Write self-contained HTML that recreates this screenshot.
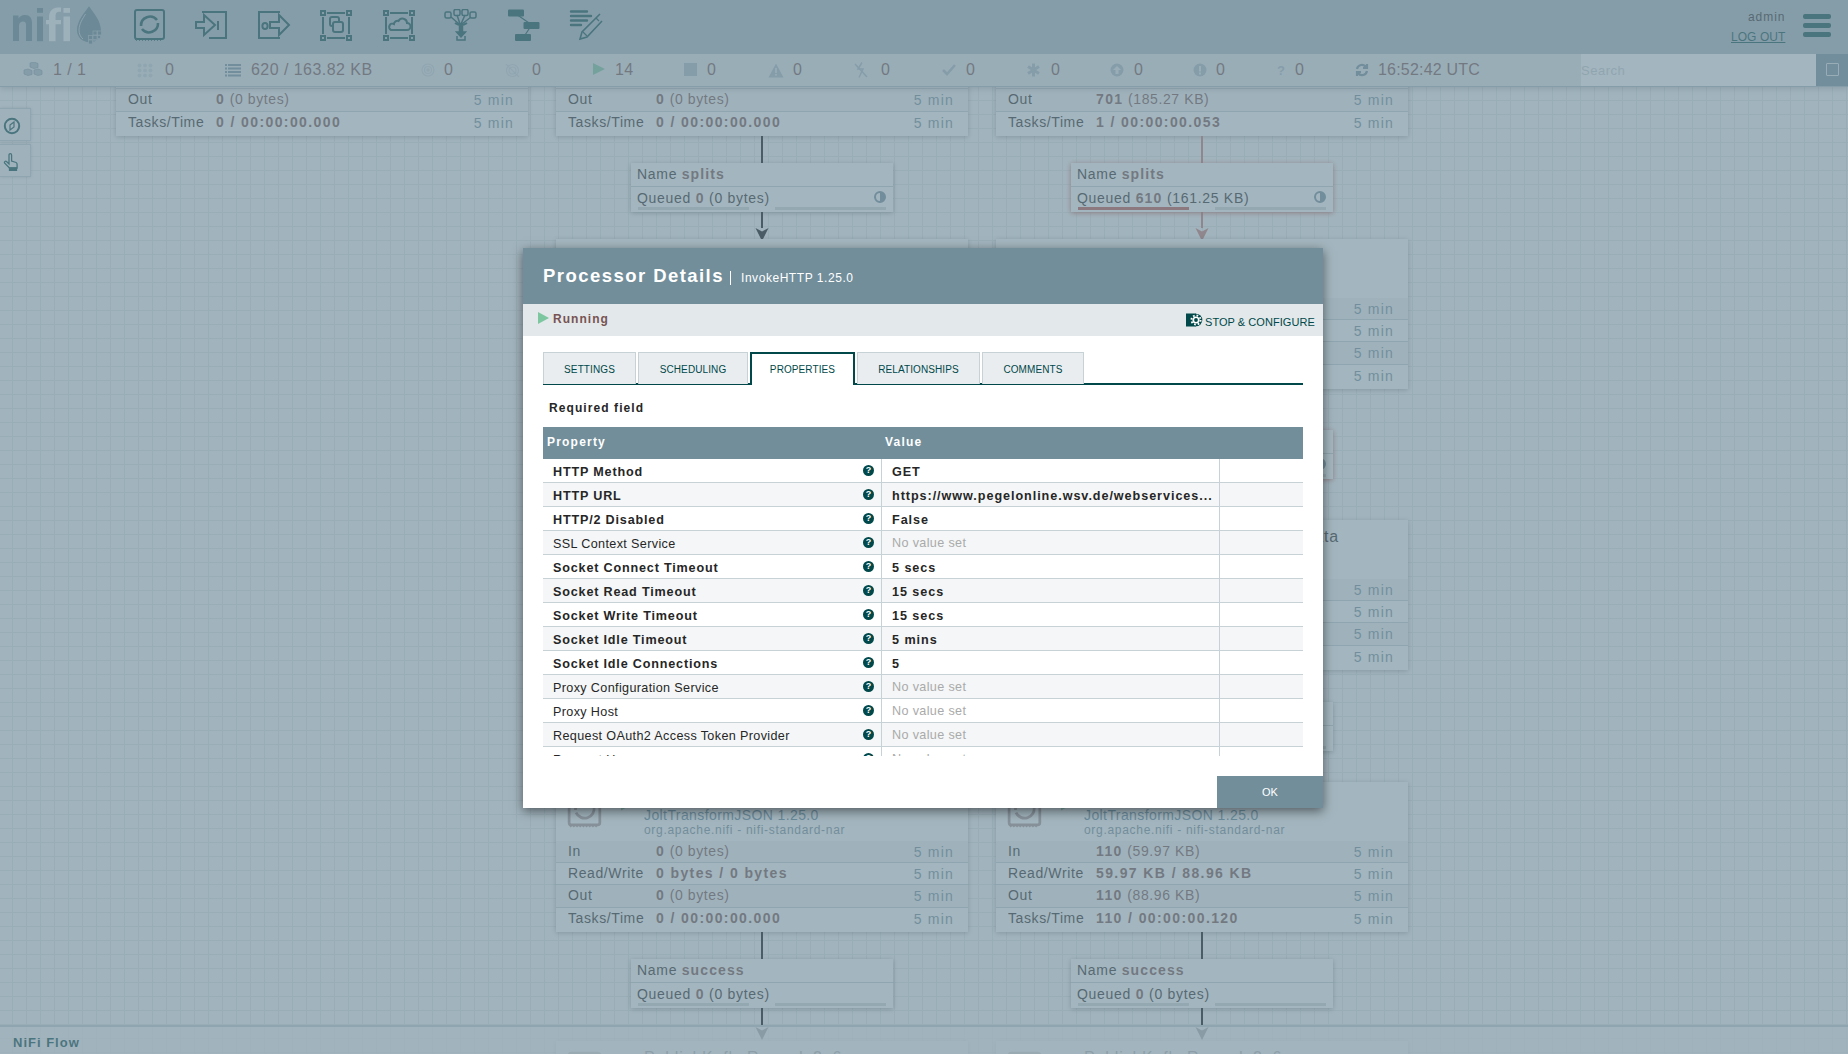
<!DOCTYPE html>
<html><head><meta charset="utf-8">
<style>
*{box-sizing:border-box;margin:0;padding:0}
html,body{width:1848px;height:1054px;overflow:hidden}
body{font-family:"Liberation Sans",sans-serif;position:relative;background:#f9fafb;
 background-image:linear-gradient(to right, #e3e9ec 1px, transparent 1px),linear-gradient(to bottom, #e3e9ec 1px, transparent 1px);
 background-size:14px 14px;background-position:12px 2px}
.abs{position:absolute}
/* header */
#header{position:absolute;z-index:6;left:0;top:0;width:1848px;height:54px;background:#aabbc3}
#status{position:absolute;z-index:5;left:0;top:54px;width:1848px;height:33px;background:#e3e8eb;border-bottom:1px solid #aabbc3;box-shadow:0 2px 6px rgba(0,0,0,0.22)}
.st{position:absolute;top:0px;height:32px;line-height:32px;font-size:16px;color:#775351;letter-spacing:0.45px;white-space:nowrap}
.sti{position:absolute}
#search{position:absolute;z-index:6;left:1581px;top:54px;width:235px;height:32px;background:#fff;font-size:13px;color:#c7d2d7;line-height:34px;padding-left:0;letter-spacing:0.5px}
#searchbtn{position:absolute;z-index:5;left:1816px;top:54px;width:32px;height:32px;background:#728e9b}
/* canvas */
.proc{position:absolute;background:#fff;box-shadow:0 1px 5px rgba(0,0,0,0.32)}
.picon{position:absolute;left:11px;top:10px}
.prun{position:absolute;left:64px;top:14px}
.pname{position:absolute;left:88px;top:7.5px;font-size:16px;color:#262626;letter-spacing:0.8px;white-space:nowrap}
.ptype{position:absolute;left:88px;top:25px;font-size:14px;color:#598599;letter-spacing:0.4px;white-space:nowrap}
.pbundle{position:absolute;left:88px;top:41px;font-size:12px;color:#728e9b;letter-spacing:0.7px;white-space:nowrap}
.prow{position:absolute;left:0;width:100%;background:#fff;font-size:14px;line-height:22px;white-space:nowrap}
.prow.odd{background:#f4f6f7}
.pl{position:absolute;left:12px;top:-1px;color:#262626;letter-spacing:0.6px}
.pv{position:absolute;left:100px;top:-1px;color:#775351;letter-spacing:0.6px}
.pv b{letter-spacing:1.4px}
.pt{position:absolute;right:14px;top:-0.5px;color:#7391a0;letter-spacing:1.2px}
.lbl{position:absolute;width:262px;height:48.5px;background:#fff;box-shadow:0 1px 5px rgba(0,0,0,0.35);font-size:14px;white-space:nowrap}
.lbl.red{box-shadow:0 1px 5px rgba(186,85,74,0.9)}
.lr1{position:absolute;left:0;padding-left:6px;top:0;height:24px;width:100%;line-height:22px;color:#262626;letter-spacing:0.7px;border-bottom:1px solid #c7d2d7}
.lr1 b{color:#775351;letter-spacing:1.1px}
.lr2{position:absolute;left:6px;top:24px;line-height:22px;color:#262626;letter-spacing:0.7px}
.lr2 b{color:#775351;letter-spacing:1.1px}
.pb1{position:absolute;left:7px;top:44px;width:111px;height:3px;background:#d4dadd}
.pb2{position:absolute;left:144px;top:44px;width:111px;height:3px;background:#d4dadd}
.lbl.red .pb1{background:#ba554a}
.lic{position:absolute;left:243px;top:28px;width:12px;height:12px;border-radius:50%;border:2px solid #728e9b;background:linear-gradient(to right,transparent 50%,#728e9b 50%)}
.vl{position:absolute;width:2px}
.arr{position:absolute}
#bread{position:absolute;z-index:5;left:0;top:1025px;width:1848px;height:29px;background:rgba(249,250,251,0.72);border-top:2px solid #c7d2d7}
#bread span{position:absolute;left:13px;top:8px;font-size:13px;font-weight:bold;color:#004849;letter-spacing:1px}
.lbtn{position:absolute;z-index:4;left:0;width:31px;height:33px;background:#f4f6f7;border:1px solid #c7d2d7;border-left:none;box-shadow:0 0 3px rgba(0,0,0,0.2)}
/* glass */
#glass{position:absolute;z-index:10;left:0;top:0;width:1848px;height:1054px;background:rgba(114,142,155,0.65)}
/* dialog */
#dlg{position:absolute;z-index:11;left:523px;top:248px;width:800px;height:560px;background:#fff;box-shadow:0 3px 10px rgba(0,0,0,0.5)}
#dhead{position:absolute;left:0;top:0;width:800px;height:56px;background:#728e9b;color:#fff;white-space:nowrap}
#dtitle{position:absolute;left:20px;top:17px;font-size:18.5px;font-weight:bold;letter-spacing:1.45px}
#dsep{position:absolute;left:207px;top:23px;width:1px;height:14px;background:#fff}
#dsub{position:absolute;left:218px;top:23px;font-size:12px;letter-spacing:0.55px}
#dstat{position:absolute;left:0;top:56px;width:800px;height:32px;background:#e3e8eb}
#drun{position:absolute;left:30px;top:8px;font-size:12px;font-weight:bold;color:#775351;letter-spacing:1.05px}
#dplay{position:absolute;left:15px;top:8px;width:0;height:0;border-top:6px solid transparent;border-bottom:6px solid transparent;border-left:11px solid #7dc7a0}
#dstop{position:absolute;left:682px;top:12px;font-size:11px;color:#004849;letter-spacing:0.05px;white-space:nowrap}
#tabs{position:absolute;left:20px;top:104px;width:760px;height:33px;border-bottom:2px solid #004849}
.tab{position:absolute;top:0;height:32px;background:#e9edf0;border:1px solid #c7d2d7;border-bottom:none;font-size:10px;letter-spacing:0.1px;color:#004849;text-align:center;line-height:33px;white-space:nowrap}
.tab.sel{background:#fff;border:2px solid #004849;border-bottom:none;height:33px;line-height:31px}
#req{position:absolute;left:26px;top:153px;font-size:12px;font-weight:bold;color:#262626;letter-spacing:1.08px}
#thead{position:absolute;left:20px;top:179px;width:760px;height:32px;background:#728e9b;color:#fff;font-size:12px;font-weight:bold;letter-spacing:1.2px}
#thead .h1{position:absolute;left:4px;top:8px}
#thead .h2{position:absolute;left:342px;top:8px}
#tview{position:absolute;left:20px;top:211px;width:760px;height:297px;overflow:hidden}
.tr{position:absolute;left:0;width:760px;height:24px;background:#fff;border-bottom:1px solid #c7d2d7;font-size:12.6px;white-space:nowrap}
.tr.alt{background:#f4f6f7}
.c1{position:absolute;left:10px;top:6px}
.c1.req{font-weight:bold;color:#262626;letter-spacing:0.82px}
.c1.opt{color:#262626;letter-spacing:0.36px}
.help{position:absolute;left:320px;top:6px;width:11px;height:11px;border-radius:50%;background:#004849;color:#fff;font-size:9px;font-weight:bold;line-height:11px;text-align:center}
.c2{position:absolute;left:338px;top:0;width:339px;height:23px;border-left:1px solid #c7d2d7;border-right:1px solid #c7d2d7}
.vreq{position:absolute;left:10px;top:6px;font-weight:bold;color:#262626;letter-spacing:0.95px}
.vnone{position:absolute;left:10px;top:5px;color:#aaa;letter-spacing:0.36px}
#ok{position:absolute;left:694px;top:528px;width:106px;height:32px;background:#728e9b;color:#fff;font-size:11px;text-align:center;line-height:32px}
</style></head><body>
<div id="header">
 <svg class="abs" style="left:8px;top:4px" width="100" height="42" viewBox="0 0 100 42">
  <path d="M5 11.5h5.5v3a7 7 0 0 1 6.5-3.5c5 0 7 3 7 8v18h-6v-16c0-2.5-1-3.5-3-3.5s-4 1.5-4 4v15.5h-6z" fill="#60808f"/>
  <rect x="29" y="4" width="6" height="4.8" fill="#60808f"/><rect x="29" y="12.5" width="6" height="24.7" fill="#60808f"/>
  <path d="M41 37.2v-17h-3v-4.2h3v-3c0-4 2.3-9.6 9-9.6h3v4.4h-2c-2 0-3.5 1.3-3.5 4.2v4h5.5v4.2h-5.5v17z" fill="#eef2f4"/>
  <rect x="55.5" y="4" width="6.5" height="4.8" fill="#eef2f4"/><rect x="55.5" y="12.5" width="6.5" height="24.7" fill="#eef2f4"/>
  <path d="M81 2.3c-4 6-12 14-12 24 0 7 5.5 12 12.5 12 7 0 11.5-5 11.5-11 0-11-8-19-12-25z" fill="#60808f"/>
  <path d="M77.5 10c-3 5-6.5 10-6.5 16 0 4 1.5 7 4 9" stroke="#d6dfe3" stroke-width="0.8" fill="none"/>
  <g fill="#60808f" stroke="#aabbc3" stroke-width="0.8"><rect x="85" y="27" width="4" height="4"/><rect x="89.5" y="27" width="4" height="4"/><rect x="80.5" y="31.5" width="4" height="4"/><rect x="85" y="31.5" width="4" height="4"/><rect x="89.5" y="31.5" width="3" height="3"/><rect x="80.5" y="36" width="4" height="4"/><rect x="85" y="36" width="2" height="2"/></g>
 </svg>
 <!-- toolbar icons -->
 <svg class="abs" style="left:133px;top:8px" width="34" height="34" viewBox="0 0 34 34" fill="none" stroke="#004849">
  <rect x="2" y="2" width="29" height="29" rx="2" stroke-width="2"/>
  <path d="M2 31l1.5 1.5 1.5-1.5 1.5 1.5 1.5-1.5 1.5 1.5 1.5-1.5 1.5 1.5 1.5-1.5 1.5 1.5 1.5-1.5 1.5 1.5 1.5-1.5 1.5 1.5 1.5-1.5 1.5 1.5 1.5-1.5 1.5 1.5 1.5-1.5" stroke-width="1"/>
  <path d="M8 18a9 9 0 0 1 16-6" stroke-width="2.6"/><path d="M25 15a9 9 0 0 1-16 6" stroke-width="2.6"/>
 </svg>
 <svg class="abs" style="left:195px;top:10px" width="34" height="30" viewBox="0 0 34 30" fill="none" stroke="#004849" stroke-width="2">
  <path d="M7 2h24v26H14"/><path d="M1 12h8V5l11 10-11 10v-7H1z"/><path d="M23 11v9"/>
 </svg>
 <svg class="abs" style="left:257px;top:10px" width="34" height="30" viewBox="0 0 34 30" fill="none" stroke="#004849" stroke-width="2">
  <path d="M23 2H2v26h21"/><ellipse cx="8" cy="16" rx="2.6" ry="3"/><path d="M13 12h9V5l10 10-10 10v-7h-9z"/>
 </svg>
 <svg class="abs" style="left:319px;top:9px" width="34" height="33" viewBox="0 0 34 33" fill="none" stroke="#004849" stroke-width="2">
  <rect x="2" y="2" width="4" height="4"/><rect x="28" y="2" width="4" height="4"/><rect x="2" y="27" width="4" height="4"/><rect x="28" y="27" width="4" height="4"/>
  <path d="M8 4h18M8 29h18M4 8v17M30 8v17"/><rect x="11" y="8" width="9" height="9" rx="2"/><rect x="14" y="13" width="10" height="10" rx="2" fill="#aabbc3"/>
 </svg>
 <svg class="abs" style="left:382px;top:9px" width="34" height="33" viewBox="0 0 34 33" fill="none" stroke="#004849" stroke-width="2">
  <rect x="2" y="2" width="4" height="4"/><rect x="28" y="2" width="4" height="4"/><rect x="2" y="27" width="4" height="4"/><rect x="28" y="27" width="4" height="4"/>
  <path d="M8 4h18M8 29h18M4 8v17M30 8v17"/><path d="M9 21h16a3.5 3.5 0 0 0 0-7 4.5 4.5 0 0 0-8.5-2 3.5 3.5 0 0 0-4.5 3 3 3 0 0 0-3 6z"/>
 </svg>
 <svg class="abs" style="left:444px;top:9px" width="34" height="34" viewBox="0 0 34 34" fill="none" stroke="#004849" stroke-width="1.5">
  <rect x="1" y="3" width="6" height="6" rx="1.5"/><rect x="10" y="0.5" width="6" height="6" rx="1.5"/><rect x="18" y="0.5" width="6" height="6" rx="1.5"/><rect x="26" y="3" width="6" height="6" rx="1.5"/>
  <path d="M7 8l8 7M13 6l3 9M21 6l-4 9M27 8l-9 7"/><path d="M11 14q6 4 12 0" stroke-width="2"/>
  <path d="M15.5 17v6h-3l4.5 5 4.5-5h-3v-6z" fill="#004849"/><path d="M13 27v4h8v-4"/>
 </svg>
 <svg class="abs" style="left:507px;top:9px" width="34" height="33" viewBox="0 0 34 33">
  <rect x="1" y="0.5" width="16" height="7" rx="1" fill="#004849"/><rect x="16.5" y="13" width="16" height="7" rx="1" fill="#004849"/><rect x="8" y="25" width="16" height="7" rx="1" fill="#004849"/>
  <path d="M9 5l16 11M24 17l-8 12" stroke="#004849" stroke-width="1.2"/>
 </svg>
 <svg class="abs" style="left:569px;top:10px" width="34" height="31" viewBox="0 0 34 31" fill="none" stroke="#004849">
  <path d="M2 1.5h16M2 6h20M2 10.5h16M2 15h10" stroke-width="2.4" stroke-linecap="round"/>
  <path d="M31 4L13 22l-2 7 7-2 15-16" stroke-width="1.6"/><path d="M14 22l4 4M27 8l3 3" stroke-width="1.2"/>
 </svg>
 <div class="abs" style="left:1748px;top:10px;font-size:12px;color:#262626;letter-spacing:0.95px">admin</div>
 <div class="abs" style="left:1731px;top:30px;font-size:12px;color:#004849;text-decoration:underline;letter-spacing:0.05px">LOG OUT</div>
 <div class="abs" style="left:1803px;top:14px;width:28px;height:4.5px;border-radius:2px;background:#004849"></div>
 <div class="abs" style="left:1803px;top:23px;width:28px;height:4.5px;border-radius:2px;background:#004849"></div>
 <div class="abs" style="left:1803px;top:32px;width:28px;height:4.5px;border-radius:2px;background:#004849"></div>
</div>
<div id="status">
 <svg class="sti" style="left:23px;top:8px" width="20" height="17" viewBox="0 0 20 17" fill="#aabbc3" stroke="#728e9b" stroke-width="0.6">
  <path d="M7 1l4-1 4 1.5v4l-4 1-4-1.5z"/><path d="M1 8l4-1 4 1.5v4l-4 1-4-1.5z"/><path d="M11 8l4-1 4 1.5v4l-4 1-4-1.5z"/>
 </svg>
 <div class="st" style="left:53px">1 / 1</div>
 <svg class="sti" style="left:137px;top:9px" width="16" height="15" viewBox="0 0 16 15" fill="#c7d2d7"><circle cx="2.5" cy="2.5" r="2"/><circle cx="8" cy="2.5" r="2"/><circle cx="13.5" cy="2.5" r="2"/><circle cx="2.5" cy="7.5" r="2"/><circle cx="8" cy="7.5" r="2"/><circle cx="13.5" cy="7.5" r="2"/><circle cx="2.5" cy="12.5" r="2"/><circle cx="8" cy="12.5" r="2"/><circle cx="13.5" cy="12.5" r="2"/></svg>
 <div class="st" style="left:165px">0</div>
 <svg class="sti" style="left:225px;top:9px" width="16" height="14" viewBox="0 0 16 14" fill="#728e9b"><rect x="0" y="1" width="2" height="2"/><rect x="3" y="1" width="13" height="2"/><rect x="0" y="4.5" width="2" height="2"/><rect x="3" y="4.5" width="13" height="2"/><rect x="0" y="8" width="2" height="2"/><rect x="3" y="8" width="13" height="2"/><rect x="0" y="11.5" width="2" height="2"/><rect x="3" y="11.5" width="13" height="2"/></svg>
 <div class="st" style="left:251px">620 / 163.82 KB</div>
 <svg class="sti" style="left:421px;top:9px" width="14" height="14" viewBox="0 0 14 14" fill="none" stroke="#c7d2d7" stroke-width="1.2"><circle cx="7" cy="7" r="6"/><circle cx="7" cy="7" r="3.5"/><circle cx="7" cy="7" r="1.2" fill="#c7d2d7"/></svg>
 <div class="st" style="left:444px">0</div>
 <svg class="sti" style="left:505px;top:9px" width="15" height="15" viewBox="0 0 15 15" fill="none" stroke="#c7d2d7" stroke-width="1.2"><circle cx="7.5" cy="7.5" r="6"/><circle cx="7.5" cy="7.5" r="3.5"/><path d="M1 1l13 13"/></svg>
 <div class="st" style="left:532px">0</div>
 <div class="sti" style="left:593px;top:9px;width:0;height:0;border-top:6.5px solid transparent;border-bottom:6.5px solid transparent;border-left:12px solid #7dc7a0"></div>
 <div class="st" style="left:615px">14</div>
 <div class="sti" style="left:684px;top:9px;width:13px;height:13px;background:#aabbc3"></div>
 <div class="st" style="left:707px">0</div>
 <svg class="sti" style="left:768px;top:8.5px" width="16" height="15" viewBox="0 0 16 15"><path d="M8 0.5L15.5 14.5H0.5z" fill="#aabbc3"/><rect x="7.2" y="5" width="1.6" height="5" fill="#e3e8eb"/><rect x="7.2" y="11" width="1.6" height="1.6" fill="#e3e8eb"/></svg>
 <div class="st" style="left:793px">0</div>
 <svg class="sti" style="left:854px;top:8px" width="14" height="16" viewBox="0 0 14 16" fill="none" stroke="#aabbc3" stroke-width="1.5"><path d="M8 0.5L4 7h5l-4 8.5"/><path d="M1 2l12 13"/></svg>
 <div class="st" style="left:881px">0</div>
 <svg class="sti" style="left:942px;top:10px" width="14" height="12" viewBox="0 0 14 12" fill="none" stroke="#aabbc3" stroke-width="2.6"><path d="M1 6l4 4 8-9"/></svg>
 <div class="st" style="left:966px">0</div>
 <svg class="sti" style="left:1027px;top:9px" width="13" height="14" viewBox="0 0 13 14" stroke="#aabbc3" stroke-width="3"><path d="M6.5 0.5v13M1 3.5l11 7M12 3.5l-11 7"/></svg>
 <div class="st" style="left:1051px">0</div>
 <svg class="sti" style="left:1110px;top:9px" width="14" height="14" viewBox="0 0 14 14"><circle cx="7" cy="7" r="6.5" fill="#aabbc3"/><path d="M7 3l-4 4h2.5v4h3V7H11z" fill="#e3e8eb"/></svg>
 <div class="st" style="left:1134px">0</div>
 <svg class="sti" style="left:1193px;top:9px" width="14" height="14" viewBox="0 0 14 14"><circle cx="7" cy="7" r="6.5" fill="#aabbc3"/><rect x="6" y="3" width="2" height="5.5" fill="#e3e8eb"/><rect x="6" y="9.5" width="2" height="2" fill="#e3e8eb"/></svg>
 <div class="st" style="left:1216px">0</div>
 <div class="sti" style="left:1277px;top:0;font-size:13px;font-weight:bold;color:#aabbc3;line-height:33px">?</div>
 <div class="st" style="left:1295px">0</div>
 <svg class="sti" style="left:1355px;top:9px" width="14" height="14" viewBox="0 0 14 14" fill="none" stroke="#728e9b" stroke-width="2.2"><path d="M2 6a5 5 0 0 1 9-2"/><path d="M12 8a5 5 0 0 1-9 2"/><path d="M12 1v4H8" fill="#728e9b"/><path d="M2 13V9h4"/></svg>
 <div class="st" style="left:1378px;letter-spacing:0.2px">16:52:42 UTC</div>
</div>
<div id="search">Search</div>
<div id="searchbtn"><div class="abs" style="left:10px;top:9px;width:13px;height:13px;border:1px solid #e3e8eb;border-radius:1px"></div></div>

<div class="proc" style="left:116px;top:-14px;width:412px;height:150px"><svg class="picon" width="36" height="36" viewBox="0 0 34 34" fill="none" stroke="#ad9897"><rect x="2" y="2" width="29" height="29" rx="2" stroke-width="2.6"/><path d="M2 31l1.5 1.8 1.5-1.8 1.5 1.8 1.5-1.8 1.5 1.8 1.5-1.8 1.5 1.8 1.5-1.8 1.5 1.8 1.5-1.8 1.5 1.8 1.5-1.8 1.5 1.8 1.5-1.8 1.5 1.8 1.5-1.8 1.5 1.8 1.5-1.8" stroke-width="1"/><path d="M8 17a9 9 0 0 1 16-6" stroke-width="2.6"/><path d="M25.5 14a9 9 0 0 1-17 5.5" stroke-width="2.6"/></svg><svg class="prun" width="14" height="15" viewBox="0 0 14 15"><path d="M1 0.5L13 7.5 1 14.5z" fill="#7dc7a0"/></svg><div class="pname" style=""></div><div class="ptype"></div><div class="pbundle"></div><div class="prow odd" style="top:59px;height:22px;border-bottom:1px solid #c7d2d7;"><span class="pl">In</span><span class="pv"><b>0</b> (0 bytes)</span><span class="pt">5 min</span></div><div class="prow" style="top:81px;height:22px;border-bottom:1px solid #c7d2d7;"><span class="pl">Read/Write</span><span class="pv"><b>0 bytes / 0 bytes</b></span><span class="pt">5 min</span></div><div class="prow odd" style="top:103px;height:23px;border-bottom:1px solid #c7d2d7;"><span class="pl">Out</span><span class="pv"><b>0</b> (0 bytes)</span><span class="pt">5 min</span></div><div class="prow" style="top:126px;height:24px;"><span class="pl">Tasks/Time</span><span class="pv"><b>0 / 00:00:00.000</b></span><span class="pt">5 min</span></div></div>
<div class="proc" style="left:556px;top:-14px;width:412px;height:150px"><svg class="picon" width="36" height="36" viewBox="0 0 34 34" fill="none" stroke="#ad9897"><rect x="2" y="2" width="29" height="29" rx="2" stroke-width="2.6"/><path d="M2 31l1.5 1.8 1.5-1.8 1.5 1.8 1.5-1.8 1.5 1.8 1.5-1.8 1.5 1.8 1.5-1.8 1.5 1.8 1.5-1.8 1.5 1.8 1.5-1.8 1.5 1.8 1.5-1.8 1.5 1.8 1.5-1.8 1.5 1.8 1.5-1.8" stroke-width="1"/><path d="M8 17a9 9 0 0 1 16-6" stroke-width="2.6"/><path d="M25.5 14a9 9 0 0 1-17 5.5" stroke-width="2.6"/></svg><svg class="prun" width="14" height="15" viewBox="0 0 14 15"><path d="M1 0.5L13 7.5 1 14.5z" fill="#7dc7a0"/></svg><div class="pname" style=""></div><div class="ptype"></div><div class="pbundle"></div><div class="prow odd" style="top:59px;height:22px;border-bottom:1px solid #c7d2d7;"><span class="pl">In</span><span class="pv"><b>0</b> (0 bytes)</span><span class="pt">5 min</span></div><div class="prow" style="top:81px;height:22px;border-bottom:1px solid #c7d2d7;"><span class="pl">Read/Write</span><span class="pv"><b>0 bytes / 0 bytes</b></span><span class="pt">5 min</span></div><div class="prow odd" style="top:103px;height:23px;border-bottom:1px solid #c7d2d7;"><span class="pl">Out</span><span class="pv"><b>0</b> (0 bytes)</span><span class="pt">5 min</span></div><div class="prow" style="top:126px;height:24px;"><span class="pl">Tasks/Time</span><span class="pv"><b>0 / 00:00:00.000</b></span><span class="pt">5 min</span></div></div>
<div class="proc" style="left:996px;top:-14px;width:412px;height:150px"><svg class="picon" width="36" height="36" viewBox="0 0 34 34" fill="none" stroke="#ad9897"><rect x="2" y="2" width="29" height="29" rx="2" stroke-width="2.6"/><path d="M2 31l1.5 1.8 1.5-1.8 1.5 1.8 1.5-1.8 1.5 1.8 1.5-1.8 1.5 1.8 1.5-1.8 1.5 1.8 1.5-1.8 1.5 1.8 1.5-1.8 1.5 1.8 1.5-1.8 1.5 1.8 1.5-1.8 1.5 1.8 1.5-1.8" stroke-width="1"/><path d="M8 17a9 9 0 0 1 16-6" stroke-width="2.6"/><path d="M25.5 14a9 9 0 0 1-17 5.5" stroke-width="2.6"/></svg><svg class="prun" width="14" height="15" viewBox="0 0 14 15"><path d="M1 0.5L13 7.5 1 14.5z" fill="#7dc7a0"/></svg><div class="pname" style=""></div><div class="ptype"></div><div class="pbundle"></div><div class="prow odd" style="top:59px;height:22px;border-bottom:1px solid #c7d2d7;"><span class="pl">In</span><span class="pv"><b>0</b> (0 bytes)</span><span class="pt">5 min</span></div><div class="prow" style="top:81px;height:22px;border-bottom:1px solid #c7d2d7;"><span class="pl">Read/Write</span><span class="pv"><b>0 bytes / 0 bytes</b></span><span class="pt">5 min</span></div><div class="prow odd" style="top:103px;height:23px;border-bottom:1px solid #c7d2d7;"><span class="pl">Out</span><span class="pv"><b>701</b> (185.27 KB)</span><span class="pt">5 min</span></div><div class="prow" style="top:126px;height:24px;"><span class="pl">Tasks/Time</span><span class="pv"><b>1 / 00:00:00.053</b></span><span class="pt">5 min</span></div></div>
<div class="vl" style="left:761px;top:136px;height:27px;background:#000"></div>
<div class="vl" style="left:761px;top:212px;height:16px;background:#000"></div><svg class="arr" style="left:754px;top:228px" width="16" height="15" viewBox="0 0 16 15"><path d="M1.5 0L8 13 14.5 0 8 3.5z" fill="#000"/></svg>
<div class="vl" style="left:1201px;top:136px;height:27px;background:#c97a72"></div>
<div class="vl" style="left:1201px;top:212px;height:16px;background:#c97a72"></div><svg class="arr" style="left:1194px;top:228px" width="16" height="15" viewBox="0 0 16 15"><path d="M1.5 0L8 13 14.5 0 8 3.5z" fill="#c97a72"/></svg>
<div class="lbl" style="left:631px;top:163px"><div class="lr1">Name <b>splits</b></div><div class="lr2">Queued <b>0</b> (0 bytes)</div><div class="pb1"></div><div class="pb2"></div><div class="lic"></div></div>
<div class="lbl red" style="left:1071px;top:163px"><div class="lr1">Name <b>splits</b></div><div class="lr2">Queued <b>610</b> (161.25 KB)</div><div class="pb1"></div><div class="pb2"></div><div class="lic"></div></div>
<div class="proc" style="left:556px;top:239px;width:412px;height:150px"><svg class="picon" width="36" height="36" viewBox="0 0 34 34" fill="none" stroke="#ad9897"><rect x="2" y="2" width="29" height="29" rx="2" stroke-width="2.6"/><path d="M2 31l1.5 1.8 1.5-1.8 1.5 1.8 1.5-1.8 1.5 1.8 1.5-1.8 1.5 1.8 1.5-1.8 1.5 1.8 1.5-1.8 1.5 1.8 1.5-1.8 1.5 1.8 1.5-1.8 1.5 1.8 1.5-1.8 1.5 1.8 1.5-1.8" stroke-width="1"/><path d="M8 17a9 9 0 0 1 16-6" stroke-width="2.6"/><path d="M25.5 14a9 9 0 0 1-17 5.5" stroke-width="2.6"/></svg><svg class="prun" width="14" height="15" viewBox="0 0 14 15"><path d="M1 0.5L13 7.5 1 14.5z" fill="#7dc7a0"/></svg><div class="pname" style=""></div><div class="ptype">SplitJson 1.25.0</div><div class="pbundle">org.apache.nifi - nifi-standard-nar</div><div class="prow odd" style="top:59px;height:22px;border-bottom:1px solid #c7d2d7;"><span class="pl">In</span><span class="pv"><b>0</b> (0 bytes)</span><span class="pt">5 min</span></div><div class="prow" style="top:81px;height:22px;border-bottom:1px solid #c7d2d7;"><span class="pl">Read/Write</span><span class="pv"><b>0 bytes / 0 bytes</b></span><span class="pt">5 min</span></div><div class="prow odd" style="top:103px;height:23px;border-bottom:1px solid #c7d2d7;"><span class="pl">Out</span><span class="pv"><b>0</b> (0 bytes)</span><span class="pt">5 min</span></div><div class="prow" style="top:126px;height:24px;"><span class="pl">Tasks/Time</span><span class="pv"><b>0 / 00:00:00.000</b></span><span class="pt">5 min</span></div></div>
<div class="proc" style="left:996px;top:239px;width:412px;height:150px"><svg class="picon" width="36" height="36" viewBox="0 0 34 34" fill="none" stroke="#ad9897"><rect x="2" y="2" width="29" height="29" rx="2" stroke-width="2.6"/><path d="M2 31l1.5 1.8 1.5-1.8 1.5 1.8 1.5-1.8 1.5 1.8 1.5-1.8 1.5 1.8 1.5-1.8 1.5 1.8 1.5-1.8 1.5 1.8 1.5-1.8 1.5 1.8 1.5-1.8 1.5 1.8 1.5-1.8 1.5 1.8 1.5-1.8" stroke-width="1"/><path d="M8 17a9 9 0 0 1 16-6" stroke-width="2.6"/><path d="M25.5 14a9 9 0 0 1-17 5.5" stroke-width="2.6"/></svg><svg class="prun" width="14" height="15" viewBox="0 0 14 15"><path d="M1 0.5L13 7.5 1 14.5z" fill="#7dc7a0"/></svg><div class="pname" style=""></div><div class="ptype">SplitJson 1.25.0</div><div class="pbundle">org.apache.nifi - nifi-standard-nar</div><div class="prow odd" style="top:59px;height:22px;border-bottom:1px solid #c7d2d7;"><span class="pl">In</span><span class="pv"><b>0</b> (0 bytes)</span><span class="pt">5 min</span></div><div class="prow" style="top:81px;height:22px;border-bottom:1px solid #c7d2d7;"><span class="pl">Read/Write</span><span class="pv"><b>0 bytes / 0 bytes</b></span><span class="pt">5 min</span></div><div class="prow odd" style="top:103px;height:23px;border-bottom:1px solid #c7d2d7;"><span class="pl">Out</span><span class="pv"><b>0</b> (0 bytes)</span><span class="pt">5 min</span></div><div class="prow" style="top:126px;height:24px;"><span class="pl">Tasks/Time</span><span class="pv"><b>0 / 00:00:00.000</b></span><span class="pt">5 min</span></div></div>
<div class="vl" style="left:761px;top:389px;height:41px;background:#000"></div>
<div class="vl" style="left:761px;top:479px;height:26px;background:#000"></div><svg class="arr" style="left:754px;top:505px" width="16" height="15" viewBox="0 0 16 15"><path d="M1.5 0L8 13 14.5 0 8 3.5z" fill="#000"/></svg>
<div class="vl" style="left:1201px;top:389px;height:41px;background:#c97a72"></div>
<div class="vl" style="left:1201px;top:479px;height:26px;background:#c97a72"></div><svg class="arr" style="left:1194px;top:505px" width="16" height="15" viewBox="0 0 16 15"><path d="M1.5 0L8 13 14.5 0 8 3.5z" fill="#c97a72"/></svg>
<div class="lbl" style="left:631px;top:430px"><div class="lr1">Name <b>splits</b></div><div class="lr2">Queued <b>0</b> (0 bytes)</div><div class="pb1"></div><div class="pb2"></div><div class="lic"></div></div>
<div class="lbl red" style="left:1071px;top:430px"><div class="lr1">Name <b>splits</b></div><div class="lr2">Queued <b>0</b> (0 bytes)</div><div class="pb1"></div><div class="pb2"></div><div class="lic"></div></div>
<div class="proc" style="left:556px;top:520px;width:412px;height:150px"><svg class="picon" width="36" height="36" viewBox="0 0 34 34" fill="none" stroke="#ad9897"><rect x="2" y="2" width="29" height="29" rx="2" stroke-width="2.6"/><path d="M2 31l1.5 1.8 1.5-1.8 1.5 1.8 1.5-1.8 1.5 1.8 1.5-1.8 1.5 1.8 1.5-1.8 1.5 1.8 1.5-1.8 1.5 1.8 1.5-1.8 1.5 1.8 1.5-1.8 1.5 1.8 1.5-1.8 1.5 1.8 1.5-1.8" stroke-width="1"/><path d="M8 17a9 9 0 0 1 16-6" stroke-width="2.6"/><path d="M25.5 14a9 9 0 0 1-17 5.5" stroke-width="2.6"/></svg><svg class="prun" width="14" height="15" viewBox="0 0 14 15"><path d="M1 0.5L13 7.5 1 14.5z" fill="#7dc7a0"/></svg><div class="pname" style="">InvokeHTTP</div><div class="ptype">InvokeHTTP 1.25.0</div><div class="pbundle">org.apache.nifi - nifi-standard-nar</div><div class="prow odd" style="top:59px;height:22px;border-bottom:1px solid #c7d2d7;"><span class="pl">In</span><span class="pv"><b>0</b> (0 bytes)</span><span class="pt">5 min</span></div><div class="prow" style="top:81px;height:22px;border-bottom:1px solid #c7d2d7;"><span class="pl">Read/Write</span><span class="pv"><b>0 bytes / 0 bytes</b></span><span class="pt">5 min</span></div><div class="prow odd" style="top:103px;height:23px;border-bottom:1px solid #c7d2d7;"><span class="pl">Out</span><span class="pv"><b>0</b> (0 bytes)</span><span class="pt">5 min</span></div><div class="prow" style="top:126px;height:24px;"><span class="pl">Tasks/Time</span><span class="pv"><b>0 / 00:00:00.000</b></span><span class="pt">5 min</span></div></div>
<div class="proc" style="left:996px;top:520px;width:412px;height:150px"><svg class="picon" width="36" height="36" viewBox="0 0 34 34" fill="none" stroke="#ad9897"><rect x="2" y="2" width="29" height="29" rx="2" stroke-width="2.6"/><path d="M2 31l1.5 1.8 1.5-1.8 1.5 1.8 1.5-1.8 1.5 1.8 1.5-1.8 1.5 1.8 1.5-1.8 1.5 1.8 1.5-1.8 1.5 1.8 1.5-1.8 1.5 1.8 1.5-1.8 1.5 1.8 1.5-1.8 1.5 1.8 1.5-1.8" stroke-width="1"/><path d="M8 17a9 9 0 0 1 16-6" stroke-width="2.6"/><path d="M25.5 14a9 9 0 0 1-17 5.5" stroke-width="2.6"/></svg><svg class="prun" width="14" height="15" viewBox="0 0 14 15"><path d="M1 0.5L13 7.5 1 14.5z" fill="#7dc7a0"/></svg><div class="pname" style="left:auto;right:69px">Transform Pegel Online Data</div><div class="ptype">InvokeHTTP 1.25.0</div><div class="pbundle">org.apache.nifi - nifi-standard-nar</div><div class="prow odd" style="top:59px;height:22px;border-bottom:1px solid #c7d2d7;"><span class="pl">In</span><span class="pv"><b>0</b> (0 bytes)</span><span class="pt">5 min</span></div><div class="prow" style="top:81px;height:22px;border-bottom:1px solid #c7d2d7;"><span class="pl">Read/Write</span><span class="pv"><b>0 bytes / 0 bytes</b></span><span class="pt">5 min</span></div><div class="prow odd" style="top:103px;height:23px;border-bottom:1px solid #c7d2d7;"><span class="pl">Out</span><span class="pv"><b>0</b> (0 bytes)</span><span class="pt">5 min</span></div><div class="prow" style="top:126px;height:24px;"><span class="pl">Tasks/Time</span><span class="pv"><b>0 / 00:00:00.000</b></span><span class="pt">5 min</span></div></div>
<div class="vl" style="left:761px;top:670px;height:32px;background:#000"></div>
<div class="vl" style="left:761px;top:750px;height:17px;background:#000"></div><svg class="arr" style="left:754px;top:767px" width="16" height="15" viewBox="0 0 16 15"><path d="M1.5 0L8 13 14.5 0 8 3.5z" fill="#000"/></svg>
<div class="vl" style="left:1201px;top:670px;height:32px;background:#000"></div>
<div class="vl" style="left:1201px;top:750px;height:17px;background:#000"></div><svg class="arr" style="left:1194px;top:767px" width="16" height="15" viewBox="0 0 16 15"><path d="M1.5 0L8 13 14.5 0 8 3.5z" fill="#000"/></svg>
<div class="lbl" style="left:631px;top:702px"><div class="lr1">Name <b>response</b></div><div class="lr2">Queued <b>0</b> (0 bytes)</div><div class="pb1"></div><div class="pb2"></div></div>
<div class="lbl" style="left:1071px;top:702px"><div class="lr1">Name <b>response</b></div><div class="lr2">Queued <b>0</b> (0 bytes)</div><div class="pb1"></div><div class="pb2"></div></div>
<div class="proc" style="left:556px;top:782px;width:412px;height:150px"><svg class="picon" width="36" height="36" viewBox="0 0 34 34" fill="none" stroke="#ad9897"><rect x="2" y="2" width="29" height="29" rx="2" stroke-width="2.6"/><path d="M2 31l1.5 1.8 1.5-1.8 1.5 1.8 1.5-1.8 1.5 1.8 1.5-1.8 1.5 1.8 1.5-1.8 1.5 1.8 1.5-1.8 1.5 1.8 1.5-1.8 1.5 1.8 1.5-1.8 1.5 1.8 1.5-1.8 1.5 1.8 1.5-1.8" stroke-width="1"/><path d="M8 17a9 9 0 0 1 16-6" stroke-width="2.6"/><path d="M25.5 14a9 9 0 0 1-17 5.5" stroke-width="2.6"/></svg><svg class="prun" width="14" height="15" viewBox="0 0 14 15"><path d="M1 0.5L13 7.5 1 14.5z" fill="#7dc7a0"/></svg><div class="pname" style="">JoltTransformJSON</div><div class="ptype">JoltTransformJSON 1.25.0</div><div class="pbundle">org.apache.nifi - nifi-standard-nar</div><div class="prow odd" style="top:59px;height:22px;border-bottom:1px solid #c7d2d7;"><span class="pl">In</span><span class="pv"><b>0</b> (0 bytes)</span><span class="pt">5 min</span></div><div class="prow" style="top:81px;height:22px;border-bottom:1px solid #c7d2d7;"><span class="pl">Read/Write</span><span class="pv"><b>0 bytes / 0 bytes</b></span><span class="pt">5 min</span></div><div class="prow odd" style="top:103px;height:23px;border-bottom:1px solid #c7d2d7;"><span class="pl">Out</span><span class="pv"><b>0</b> (0 bytes)</span><span class="pt">5 min</span></div><div class="prow" style="top:126px;height:24px;"><span class="pl">Tasks/Time</span><span class="pv"><b>0 / 00:00:00.000</b></span><span class="pt">5 min</span></div></div>
<div class="proc" style="left:996px;top:782px;width:412px;height:150px"><svg class="picon" width="36" height="36" viewBox="0 0 34 34" fill="none" stroke="#ad9897"><rect x="2" y="2" width="29" height="29" rx="2" stroke-width="2.6"/><path d="M2 31l1.5 1.8 1.5-1.8 1.5 1.8 1.5-1.8 1.5 1.8 1.5-1.8 1.5 1.8 1.5-1.8 1.5 1.8 1.5-1.8 1.5 1.8 1.5-1.8 1.5 1.8 1.5-1.8 1.5 1.8 1.5-1.8 1.5 1.8 1.5-1.8" stroke-width="1"/><path d="M8 17a9 9 0 0 1 16-6" stroke-width="2.6"/><path d="M25.5 14a9 9 0 0 1-17 5.5" stroke-width="2.6"/></svg><svg class="prun" width="14" height="15" viewBox="0 0 14 15"><path d="M1 0.5L13 7.5 1 14.5z" fill="#7dc7a0"/></svg><div class="pname" style="">JoltTransformJSON</div><div class="ptype">JoltTransformJSON 1.25.0</div><div class="pbundle">org.apache.nifi - nifi-standard-nar</div><div class="prow odd" style="top:59px;height:22px;border-bottom:1px solid #c7d2d7;"><span class="pl">In</span><span class="pv"><b>110</b> (59.97 KB)</span><span class="pt">5 min</span></div><div class="prow" style="top:81px;height:22px;border-bottom:1px solid #c7d2d7;"><span class="pl">Read/Write</span><span class="pv"><b>59.97 KB / 88.96 KB</b></span><span class="pt">5 min</span></div><div class="prow odd" style="top:103px;height:23px;border-bottom:1px solid #c7d2d7;"><span class="pl">Out</span><span class="pv"><b>110</b> (88.96 KB)</span><span class="pt">5 min</span></div><div class="prow" style="top:126px;height:24px;"><span class="pl">Tasks/Time</span><span class="pv"><b>110 / 00:00:00.120</b></span><span class="pt">5 min</span></div></div>
<div class="vl" style="left:761px;top:932px;height:27px;background:#000"></div>
<div class="vl" style="left:761px;top:1007px;height:20px;background:#000"></div><svg class="arr" style="left:754px;top:1027px" width="16" height="15" viewBox="0 0 16 15"><path d="M1.5 0L8 13 14.5 0 8 3.5z" fill="#000"/></svg>
<div class="vl" style="left:1201px;top:932px;height:27px;background:#000"></div>
<div class="vl" style="left:1201px;top:1007px;height:20px;background:#000"></div><svg class="arr" style="left:1194px;top:1027px" width="16" height="15" viewBox="0 0 16 15"><path d="M1.5 0L8 13 14.5 0 8 3.5z" fill="#000"/></svg>
<div class="lbl" style="left:631px;top:959px"><div class="lr1">Name <b>success</b></div><div class="lr2">Queued <b>0</b> (0 bytes)</div><div class="pb1"></div><div class="pb2"></div></div>
<div class="lbl" style="left:1071px;top:959px"><div class="lr1">Name <b>success</b></div><div class="lr2">Queued <b>0</b> (0 bytes)</div><div class="pb1"></div><div class="pb2"></div></div>
<div class="proc" style="left:556px;top:1041px;width:412px;height:150px"><svg class="picon" width="36" height="36" viewBox="0 0 34 34" fill="none" stroke="#ad9897"><rect x="2" y="2" width="29" height="29" rx="2" stroke-width="2.6"/><path d="M2 31l1.5 1.8 1.5-1.8 1.5 1.8 1.5-1.8 1.5 1.8 1.5-1.8 1.5 1.8 1.5-1.8 1.5 1.8 1.5-1.8 1.5 1.8 1.5-1.8 1.5 1.8 1.5-1.8 1.5 1.8 1.5-1.8 1.5 1.8 1.5-1.8" stroke-width="1"/><path d="M8 17a9 9 0 0 1 16-6" stroke-width="2.6"/><path d="M25.5 14a9 9 0 0 1-17 5.5" stroke-width="2.6"/></svg><svg class="prun" width="14" height="15" viewBox="0 0 14 15"><path d="M1 0.5L13 7.5 1 14.5z" fill="#7dc7a0"/></svg><div class="pname" style="">PublishKafkaRecord_2_6</div><div class="ptype">PublishKafkaRecord_2_6 1.25.0</div><div class="pbundle"></div></div>
<div class="proc" style="left:996px;top:1041px;width:412px;height:150px"><svg class="picon" width="36" height="36" viewBox="0 0 34 34" fill="none" stroke="#ad9897"><rect x="2" y="2" width="29" height="29" rx="2" stroke-width="2.6"/><path d="M2 31l1.5 1.8 1.5-1.8 1.5 1.8 1.5-1.8 1.5 1.8 1.5-1.8 1.5 1.8 1.5-1.8 1.5 1.8 1.5-1.8 1.5 1.8 1.5-1.8 1.5 1.8 1.5-1.8 1.5 1.8 1.5-1.8 1.5 1.8 1.5-1.8" stroke-width="1"/><path d="M8 17a9 9 0 0 1 16-6" stroke-width="2.6"/><path d="M25.5 14a9 9 0 0 1-17 5.5" stroke-width="2.6"/></svg><svg class="prun" width="14" height="15" viewBox="0 0 14 15"><path d="M1 0.5L13 7.5 1 14.5z" fill="#7dc7a0"/></svg><div class="pname" style="">PublishKafkaRecord_2_6</div><div class="ptype">PublishKafkaRecord_2_6 1.25.0</div><div class="pbundle"></div></div>

<div class="lbtn" style="top:108px"><svg class="abs" style="left:3px;top:8px" width="18" height="18" viewBox="0 0 18 18" fill="none" stroke="#004849" stroke-width="2"><circle cx="9" cy="9" r="7.2"/><path d="M7 8l4-3v5l-4 3z" stroke-width="1.2"/></svg></div>
<div class="lbtn" style="top:144px"><svg class="abs" style="left:3px;top:8px" width="18" height="18" viewBox="0 0 18 18" fill="none" stroke="#004849" stroke-width="1.3"><path d="M6 2a1.3 1.3 0 0 1 2.6 0v6l4.5 1.5c1 .5 1 1 1 2v3.5H6.5L1.5 10a1.3 1.3 0 0 1 2-1.5L6 11z"/><rect x="6.5" y="15" width="7" height="2.5" fill="#004849"/></svg></div>
<div id="bread"><span>NiFi Flow</span></div>

<div id="glass"></div>

<div id="dlg">
 <div id="dhead"><div id="dtitle">Processor Details</div><div id="dsep"></div><div id="dsub">InvokeHTTP 1.25.0</div></div>
 <div id="dstat"><div id="dplay"></div><div id="drun">Running</div>
  <svg class="abs" style="left:663px;top:8.5px" width="17" height="15" viewBox="0 0 17 15"><rect x="0" y="0.5" width="10" height="13" fill="#004849"/><circle cx="10" cy="7" r="6.3" fill="#004849"/><circle cx="10" cy="7" r="3.6" fill="#fff"/><circle cx="10" cy="7" r="4.6" fill="none" stroke="#fff" stroke-width="1.9" stroke-dasharray="1.7 1.91"/><circle cx="10" cy="7" r="1.9" fill="#004849"/></svg>
  <div id="dstop">STOP &amp; CONFIGURE</div></div>
 <div id="tabs">
  <div class="tab" style="left:0;width:93px">SETTINGS</div>
  <div class="tab" style="left:95px;width:110px">SCHEDULING</div>
  <div class="tab sel" style="left:207px;width:105px">PROPERTIES</div>
  <div class="tab" style="left:314px;width:123px">RELATIONSHIPS</div>
  <div class="tab" style="left:439px;width:102px">COMMENTS</div>
 </div>
 <div id="req">Required field</div>
 <div id="thead"><span class="h1">Property</span><span class="h2">Value</span></div>
 <div id="tview">
<div class="tr" style="top:0px"><div class="c1 req">HTTP Method</div><div class="help">?</div><div class="c2"><span class="vreq">GET</span></div><div class="c3"></div></div>
<div class="tr alt" style="top:24px"><div class="c1 req">HTTP URL</div><div class="help">?</div><div class="c2"><span class="vreq">https://www.pegelonline.wsv.de/webservices...</span></div><div class="c3"></div></div>
<div class="tr" style="top:48px"><div class="c1 req">HTTP/2 Disabled</div><div class="help">?</div><div class="c2"><span class="vreq">False</span></div><div class="c3"></div></div>
<div class="tr alt" style="top:72px"><div class="c1 opt">SSL Context Service</div><div class="help">?</div><div class="c2"><span class="vnone">No value set</span></div><div class="c3"></div></div>
<div class="tr" style="top:96px"><div class="c1 req">Socket Connect Timeout</div><div class="help">?</div><div class="c2"><span class="vreq">5 secs</span></div><div class="c3"></div></div>
<div class="tr alt" style="top:120px"><div class="c1 req">Socket Read Timeout</div><div class="help">?</div><div class="c2"><span class="vreq">15 secs</span></div><div class="c3"></div></div>
<div class="tr" style="top:144px"><div class="c1 req">Socket Write Timeout</div><div class="help">?</div><div class="c2"><span class="vreq">15 secs</span></div><div class="c3"></div></div>
<div class="tr alt" style="top:168px"><div class="c1 req">Socket Idle Timeout</div><div class="help">?</div><div class="c2"><span class="vreq">5 mins</span></div><div class="c3"></div></div>
<div class="tr" style="top:192px"><div class="c1 req">Socket Idle Connections</div><div class="help">?</div><div class="c2"><span class="vreq">5</span></div><div class="c3"></div></div>
<div class="tr alt" style="top:216px"><div class="c1 opt">Proxy Configuration Service</div><div class="help">?</div><div class="c2"><span class="vnone">No value set</span></div><div class="c3"></div></div>
<div class="tr" style="top:240px"><div class="c1 opt">Proxy Host</div><div class="help">?</div><div class="c2"><span class="vnone">No value set</span></div><div class="c3"></div></div>
<div class="tr alt" style="top:264px"><div class="c1 opt">Request OAuth2 Access Token Provider</div><div class="help">?</div><div class="c2"><span class="vnone">No value set</span></div><div class="c3"></div></div>
<div class="tr" style="top:288px"><div class="c1 opt">Request Username</div><div class="help">?</div><div class="c2"><span class="vnone">No value set</span></div><div class="c3"></div></div>
 </div>
 <div id="ok">OK</div>
</div>
</body></html>
